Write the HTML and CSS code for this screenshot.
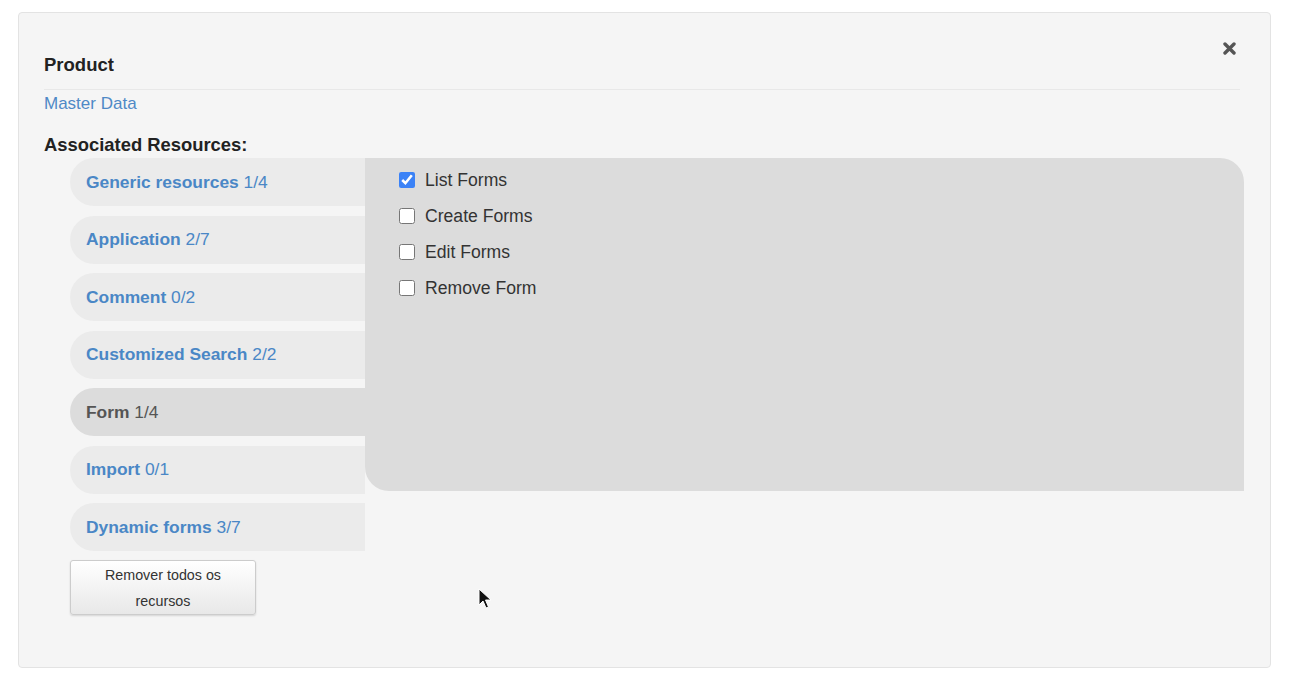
FILE: index.html
```html
<!DOCTYPE html>
<html lang="pt">

<head>
  <meta charset="utf-8" />
  <title>Product - Associated Resources</title>
  <meta name="viewport" content="width=device-width, initial-scale=1">
  <link rel="stylesheet" href="styles.css">
</head>

<body>
  <div class="page">
    <!-- =================== PANEL =================== -->
    <section class="panel">
      <div class="panel-head">
        <h4>Product</h4>
        <button class="close" type="button" aria-label="Fechar">
          <svg width="13" height="13" viewBox="0 0 13 13">
            <path d="M2 2 L11 11 M11 2 L2 11" stroke="#555" stroke-width="3.4" stroke-linecap="round" />
          </svg>
        </button>
      </div>
      <a class="link" href="#">Master Data</a>
      <h5>Associated Resources:</h5>

      <div class="resources">
        <div class="side">
          <ul class="tabs">
            <li><a href="#">Generic resources <span>1/4</span></a></li>
            <li><a href="#">Application <span>2/7</span></a></li>
            <li><a href="#">Comment <span>0/2</span></a></li>
            <li><a href="#">Customized Search <span>2/2</span></a></li>
            <li class="active"><a href="#">Form <span>1/4</span></a></li>
            <li><a href="#">Import <span>0/1</span></a></li>
            <li><a href="#">Dynamic forms <span>3/7</span></a></li>
          </ul>
          <button class="btn" type="button">Remover todos os recursos</button>
        </div>

        <div class="pane">
          <label class="check"><input type="checkbox" checked> List Forms</label>
          <label class="check"><input type="checkbox"> Create Forms</label>
          <label class="check"><input type="checkbox"> Edit Forms</label>
          <label class="check"><input type="checkbox"> Remove Form</label>
        </div>
      </div>

      <!-- cursor do mouse -->
      <svg class="cursor" width="14" height="22" viewBox="0 0 14 22">
        <path d="M1 1 L1 17 L5 13 L8 20 L10.5 19 L7.5 12 L13 12 Z" fill="#111" stroke="#fff" stroke-width="1" />
      </svg>
    </section>
  </div>
</body>
</html>
```

FILE: styles.css
```css
/* ===== RESET & BODY ===== */
* {
  box-sizing: border-box;
  margin: 0;
  padding: 0
}

body {
  font-family: "Liberation Sans", Arial, sans-serif;
  background: #fff;
  color: #333
}

.page {
  padding: 12px 22px 0 18px
}

/* ===== PANEL ===== */
.panel {
  position: relative;
  background: #f5f5f5;
  border: 1px solid #e3e3e3;
  border-radius: 4px;
  height: 656px;
  padding: 42px 26px 0 25px
}

.panel-head {
  border-bottom: 1px solid #e8e8e8;
  padding-bottom: 14px;
  margin-right: 4px
}

h4 {
  font-size: 18.5px;
  line-height: 20px;
  font-weight: bold;
  color: #222
}

.close {
  position: absolute;
  top: 29px;
  right: 34px;
  border: 0;
  background: none;
  line-height: 0;
  cursor: pointer
}

.link {
  display: block;
  margin-top: 4px;
  font-size: 17px;
  line-height: 20px;
  color: #4f89c6;
  text-decoration: none
}

h5 {
  margin-top: 21px;
  font-size: 18.4px;
  line-height: 20px;
  font-weight: bold;
  color: #222
}

/* ===== RECURSOS ===== */
.resources {
  display: flex;
  margin: 3px 0 0 26px
}

.side {
  width: 295px;
  flex: none
}

.tabs {
  list-style: none;
  display: flex;
  flex-direction: column;
  gap: 9.5px
}

.tabs li {
  height: 48px;
  background: #ebebeb;
  border-radius: 24px 0 0 24px;
  display: flex;
  align-items: center;
  padding-left: 16px
}

.tabs a {
  font-size: 17.4px;
  font-weight: bold;
  color: #4a87c6;
  text-decoration: none
}

.tabs span {
  font-weight: normal
}

.tabs li.active {
  background: #dcdcdc
}

.tabs li.active a {
  color: #555
}

.btn {
  display: block;
  margin-top: 9px;
  width: 186px;
  height: 55px;
  font-family: "Liberation Sans", Arial, sans-serif;
  font-size: 14.3px;
  line-height: 26px;
  color: #333;
  padding: 0 20px;
  background: linear-gradient(#fff, #e8e8e8);
  border: 1px solid #ccc;
  border-radius: 3px;
  box-shadow: 0 1px 2px #0002;
  cursor: pointer
}

.pane {
  flex: 1;
  height: 333px;
  background: #dcdcdc;
  border-radius: 0 24px 0 24px;
  padding: 11px 34px;
  display: flex;
  flex-direction: column;
  gap: 14px
}

.check {
  display: flex;
  align-items: center;
  gap: 10px;
  font-size: 17.6px;
  line-height: 22px;
  color: #333
}

.check input {
  width: 16px;
  height: 16px;
  margin: 0;
  accent-color: #3b82f6
}

.cursor {
  position: absolute;
  left: 459px;
  top: 575px
}
```
